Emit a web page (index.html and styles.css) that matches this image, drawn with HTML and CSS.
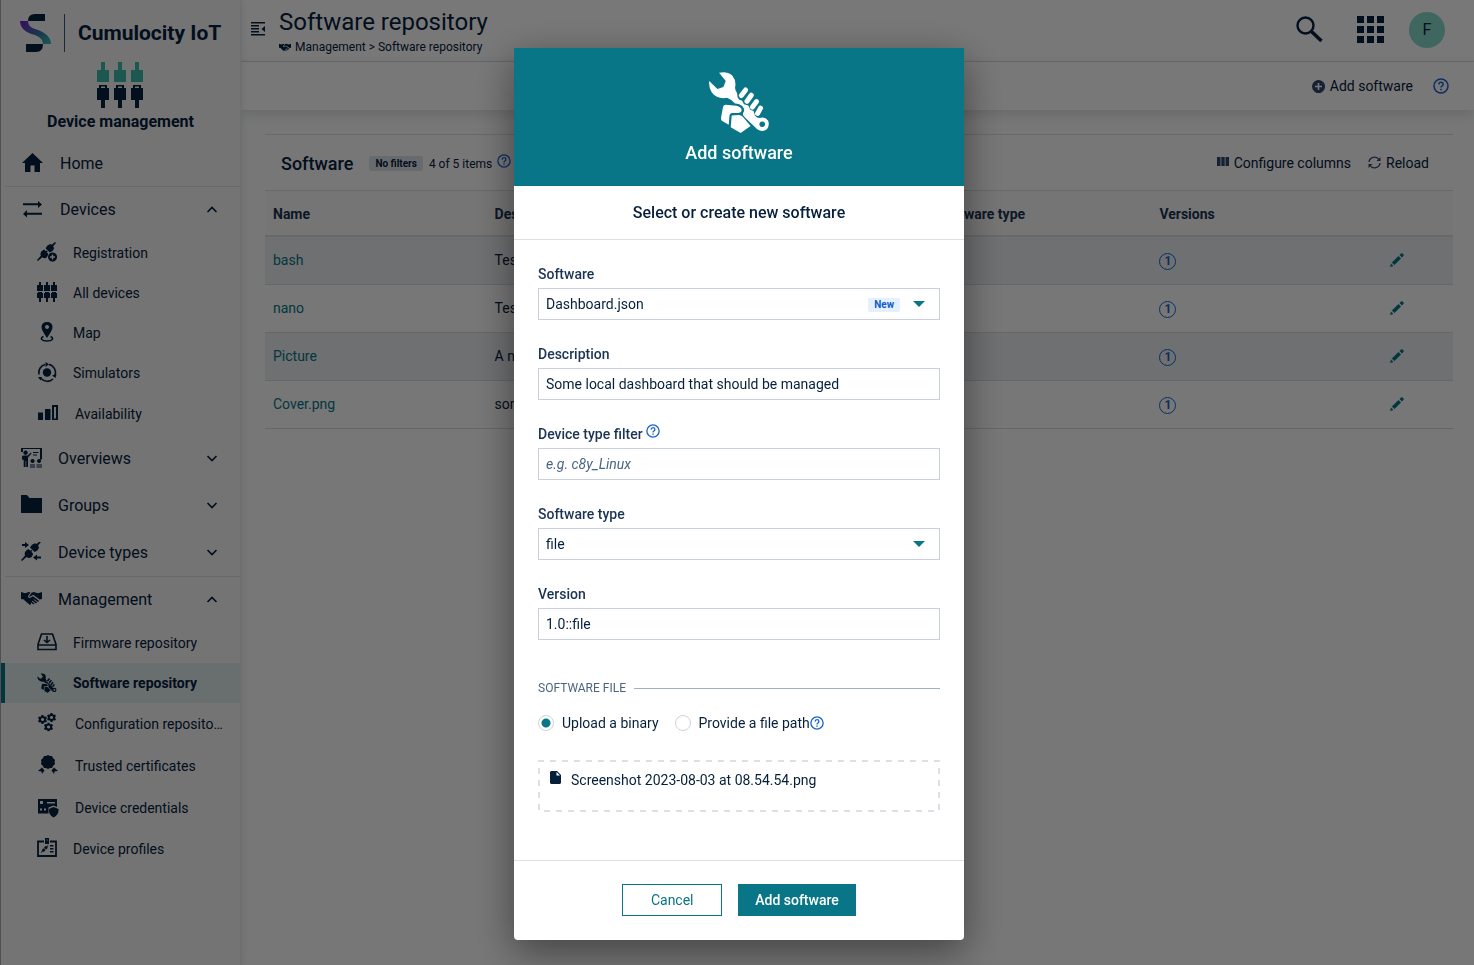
FILE: index.html
```html
<!DOCTYPE html>
<html lang="en">
<head>
<meta charset="utf-8">
<title>Software repository</title>
<link rel="stylesheet" href="styles.css">
</head>
<body>
<svg class="defs" aria-hidden="true">
  <symbol id="wrench" viewBox="205 62 186 190">
    <path fill-rule="evenodd" d="M238 67Q262 62 277 75Q291 92 286 112Q286 122 292 128L294 142Q297 150 307 151L313 162L326 166L332 179L342 183L346 196Q352 204 360 204Q376 198 386 212Q391 226 382 238Q368 248 353 238L316 202Q306 193 312 186Q316 178 309 169Q300 160 286 160Q275 148 262 143Q232 148 216 127Q206 112 208 92L233 116L251 110L258 92ZM368 214a8.500 8.500 0 1 0 .1 0Z"/>
    <path d="M318 119L305 136M335 135L322 153M351 154L338 171M363 174L354 190" fill="none" stroke="currentColor" stroke-width="15" stroke-linecap="round"/>
    <path d="M258 164L290 167Q306 171 306 181Q304 189 290 189L278 189Q269 190 269 200L267 224L246 212Q243 207 244 202L249 174Q251 164 258 164ZM276 196L297 195Q305 195 310 201L333 228L303 249L273 232Z"/>
  </symbol>
  <symbol id="shake" viewBox="0 0 21 15"><path d="M0 1L4 2.200 8 1 9.500 1.600 7 5Q6.800 7.500 9.500 6.800L12 5.200 18 9.800Q18 11.200 16.300 10.600L13 8.200 12.600 8.800 16 11.300Q15.800 12.700 14.300 12L11.500 9.800 11 10.400 13.600 12.600Q13 13.800 11.800 13L10 11.600Q10.500 13.500 9 14L7.500 12.800Q6.500 12.500 6.200 11.500 5 11.300 4.800 10.300 3.500 10 3 8.500L0 8ZM21 1L17 2.200 12.500 1 10.500 1.800 8.200 5.200Q8.300 6 9.300 5.600L12.200 3.800 18.600 8.500 21 8Z"/></symbol>
  <symbol id="help" viewBox="0 0 16 16"><circle cx="8" cy="8" r="7" fill="none" stroke="currentColor" stroke-width="1.500"/><path d="M5.800 6.400Q5.900 4.200 8 4.200T10.200 6.200Q10.200 7.200 9 8Q8 8.600 8 9.600" fill="none" stroke="currentColor" stroke-width="1.500"/><path d="M7.200 10.800h1.600v1.500H7.200z"/></symbol>
  <symbol id="up" viewBox="0 0 12 12"><path d="M1.500 8L6 3.500 10.500 8" fill="none" stroke="currentColor" stroke-width="1.700"/></symbol>
  <symbol id="down" viewBox="0 0 12 12"><path d="M1.500 3L6 7.500 10.500 3" fill="none" stroke="currentColor" stroke-width="1.700"/></symbol>
  <symbol id="pencil" viewBox="0 0 14 14"><path d="M0 14L1 10.500 3.500 13ZM1.800 9.500L8.500 3 11 5.500 4.500 12ZM9.500 2L11.300.3Q12 0 12.500.5L13.600 1.600Q14 2.200 13.600 2.800L12 4.500Z"/></symbol>
  <symbol id="plug" viewBox="0 0 20 20"><path d="M20 1L17 4.500 18 6.500Q17 10 13.500 11L9 6.500Q10.500 3 14 2.200L15.500 3 19 0ZM7.500 8L9.300 9.800 10.300 8.800 11.300 9.800 10.300 10.800 12 12.500Q11.500 17 7.500 17L5.500 16 1 20 0 19 4 14.500Q2.500 10.500 7.500 8Z"/></symbol>
  <symbol id="gear" viewBox="0 0 10 10"><path fill-rule="evenodd" d="M4 0h2l.4 1.400 1.200.6 1.400-.4 1 1.800-1 1v1.200l1 1-1 1.800-1.400-.4-1.200.6L6 10H4l-.4-1.400L2.400 8 1 8.400 0 6.600l1-1V4.400l-1-1 1-1.800 1.400.4 1.200-.6ZM5 3.200a1.800 1.800 0 1 0 .1 0Z"/></symbol>
</svg>

<div class="app">
  <aside class="sidebar">
    <div class="brand">
      <svg class="logo" viewBox="0 0 31 38"><defs><linearGradient id="swoosh" x1="0" y1="0" x2="1" y2="1"><stop offset="0" stop-color="#7a1cc8"/><stop offset=".55" stop-color="#386fa8"/><stop offset="1" stop-color="#35c3a8"/></linearGradient></defs><path d="M25 0H15Q8 0 8 7H25ZM6 38H16Q23 38 23 30H6Z"/><path d="M0 7H8Q8 13 15 15Q31 20 31 30H23Q23 24 15 21Q0 17 0 7Z" fill="url(#swoosh)"/></svg>
      <span class="brand-name">Cumulocity IoT</span>
    </div>
    <div class="app-title">
      <svg class="plugs" viewBox="0 0 46 46"><path class="mint" d="M0 8H4V0H8V8H12V20H0ZM17 8H21V0H25V8H29V20H17ZM34 8H38V0H42V8H46V20H34Z"/><path fill-rule="evenodd" d="M0 26H2V23H10V26H12V38H8V46H4V38H0ZM4 24.500V26H8V24.500ZM17 26H19V23H27V26H29V38H25V46H21V38H17ZM21 24.500V26H25V24.500ZM34 26H36V23H44V26H46V38H42V46H38V38H34ZM38 24.500V26H42V24.500Z"/></svg>
      <span>Device management</span>
    </div>
    <nav class="nav">
      <a class="item spaced" href="#"><svg viewBox="0 0 21 21"><path d="M10.500 0L0 10H3V19H8.500V12.500H12.500V19H18V10H21Z"/></svg><span>Home</span></a>
      <a class="item spaced ruled" href="#"><svg viewBox="0 0 21 21"><path d="M1 3.300H16V1L20 4.500 16 8V5.200H1ZM20 12.800H5V10L1 14 5 17.500V14.700H20Z"/></svg><span>Devices</span><svg class="chev"><use href="#up"/></svg></a>
      <a class="sub" href="#"><svg viewBox="0 1 20 20"><use href="#plug" width="19" height="19"/><circle cx="15.500" cy="15" r="5" fill="#f7f7f7"/><path fill-rule="evenodd" d="M15.500 10.500a4.500 4.500 0 1 0 .1 0ZM14.800 12.500H16.200V14.300H18V15.700H16.200V17.500H14.800V15.700H13V14.300H14.800Z"/></svg><span>Registration</span></a>
      <a class="sub" href="#"><svg viewBox="0 0 20 20"><path d="M0 2H2V-1H4V2H6V8H0ZM7 2H9V-1H11V2H13V8H7ZM14 2H16V-1H18V2H20V8H14ZM0 10H1V9H5V10H6V15H4V19H2V15H0ZM7 10H8V9H12V10H13V15H11V19H9V15H7ZM14 10H15V9H19V10H20V15H18V19H16V15H14Z"/></svg><span>All devices</span></a>
      <a class="sub" href="#"><svg viewBox="0 1 20 20"><path fill-rule="evenodd" d="M10 0Q15.500 0 15.500 5.500Q15.500 8 10 16Q4.500 8 4.500 5.500Q4.500 0 10 0ZM10 3a2 2 0 1 0 .1 0Z"/><path d="M6.500 14.500Q4 15.500 4.500 17.200Q6 19 10 19T15.500 17.200Q16 15.500 13.500 14.500" fill="none" stroke="currentColor" stroke-width="1.500"/></svg><span>Map</span></a>
      <a class="sub" href="#"><svg viewBox="0 1 20 20"><circle cx="10" cy="10.500" r="4.200"/><path d="M2 12.500A8.300 8.300 0 0 1 8 2.500M12 2.500A8.300 8.300 0 0 1 18 13.500M16 17A8.300 8.300 0 0 1 4 16.500" fill="none" stroke="currentColor" stroke-width="1.600"/><path d="M8.500 0L12 2.300 8.500 5ZM19.500 12L18.500 16 15 13.500ZM1 15H5L3.500 18.500Z"/></svg><span>Simulators</span></a>
      <a class="sub tall" href="#"><svg viewBox="0 1 20 20"><path fill-rule="evenodd" d="M0 9.500H5V17H0ZM7 6H12.500V17H7ZM14 2H20V17H14ZM16 4V15.500H18V4Z"/></svg><span>Availability</span></a>
      <a class="item" href="#"><svg viewBox="0 1 21 21"><path d="M0 0H21V12.500H19V2H2V5H0ZM4.500 3.500a2.200 2.200 0 1 0 .1 0ZM2 8.500H6.500L10 5.500 10.500 6.500 7 10.500V20H5.200V14H4.600V20H2.700V13L1 12.500V9.500ZM12 5H17.500V6H12ZM12 7.500H16V8.500H12ZM11.500 12a2 2 0 1 0 .1 0ZM18 12a2 2 0 1 0 .1 0ZM9 17.500H14V18.500H9ZM15.500 17.500H21V18.500H15.500ZM9 19.500H14V20.500H9ZM15.500 19.500H21V20.500H15.500Z"/></svg><span>Overviews</span><svg class="chev"><use href="#down"/></svg></a>
      <a class="item" href="#"><svg viewBox="0 1 21 21"><path d="M0 1H6L8.500 4H21V19H0Z"/></svg><span>Groups</span><svg class="chev"><use href="#down"/></svg></a>
      <a class="item" href="#"><svg viewBox="0 1 21 21"><use href="#plug" width="20" height="20"/><path d="M1 3H4V1L8 4 4 7V5H1ZM20 15.500H16V13.500L12 16.500 16 19.500V17.500H20Z"/></svg><span>Device types</span><svg class="chev"><use href="#down"/></svg></a>
      <a class="item ruled" href="#"><svg viewBox="0 1 21 21"><use href="#shake" y="2" width="21" height="15"/></svg><span>Management</span><svg class="chev"><use href="#up"/></svg></a>
      <a class="sub" href="#"><svg viewBox="0 1 20 20"><path d="M4.500 2H15.500L19 12.500V17.500H1V12.500ZM1 13H19M10 4V10M7 8L10 10.500 13 8" fill="none" stroke="currentColor" stroke-width="1.600"/></svg><span>Firmware repository</span></a>
      <a class="sub active" href="#"><svg><use href="#wrench"/></svg><span>Software repository</span></a>
      <a class="sub tall" href="#"><svg viewBox="0 1 20 20"><use href="#gear" x="0" y="2" width="9" height="9"/><use href="#gear" x="9" y="0" width="9" height="9"/><use href="#gear" x="6" y="9.500" width="9" height="9"/></svg><span>Configuration repository</span></a>
      <a class="sub tall" href="#"><svg viewBox="0 1 20 20"><path d="M10 0L12 1 14 1 15 3 17 5 16.500 7 17 9 15 11 14 13 12 13 10 14 8 13 6 13 5 11 3 9 3.500 7 3 5 5 3 6 1 8 1ZM4 12.500L6.500 15.500 4 19 3.500 16.500 0 16ZM16 12.500L13.500 15.500 16 19 16.500 16.500 20 16Z"/></svg><span>Trusted certificates</span></a>
      <a class="sub tall" href="#"><svg viewBox="0 0 20 20"><path fill-rule="evenodd" d="M0 1H19V9L15.500 7.500 10.500 9.500 10.500 15.500H0ZM2 3V6H5V3ZM9 4V5.500H17V4ZM2 10.500V12.500H4V10.500ZM6 10.500V12.500H8V10.500Z"/><path d="M15.500 9L20.500 11Q21 17 15.500 19.500Q10.500 17 11 11Z"/></svg><span>Device credentials</span></a>
      <a class="sub" href="#"><svg viewBox="0 1 20 20"><path d="M7 3.500H1V18H19V3.500H13" fill="none" stroke="currentColor" stroke-width="1.800"/><path fill-rule="evenodd" d="M8 0H12V6H8ZM9.500 1.500V2.500H10.500V1.500ZM13 7H16.500V8.500H13ZM13 10H16.500V11.500H13ZM13 13H16.500V14.500H13Z"/><use href="#plug" x="3.500" y="7" width="8" height="8"/></svg><span>Device profiles</span></a>
    </nav>
  </aside>

  <main class="main">
    <header class="topbar">
      <button class="icon-btn" aria-label="Toggle navigation"><svg width="14" height="14" viewBox="0 0 14 14"><path d="M0 0H14V1.500H0ZM0 3H8V4.500H0ZM0 6H8V7.500H0ZM0 9H8V10.500H0ZM0 12H14V13.500H0ZM14 4V10L10.500 7Z"/></svg></button>
      <div class="heading">
        <h1>Software repository</h1>
        <p class="crumbs"><svg width="12" height="9"><use href="#shake"/></svg>Management &gt; Software repository</p>
      </div>
      <div class="tools">
        <button class="icon-btn" aria-label="Search"><svg width="27" height="27" viewBox="0 0 27 27"><circle cx="9.500" cy="9.500" r="8" fill="none" stroke="currentColor" stroke-width="2.400"/><path d="M15.500 15.500L25.500 25" stroke="currentColor" stroke-width="3.600"/></svg></button>
        <button class="icon-btn" aria-label="Applications"><svg width="27" height="27" viewBox="0 0 27 27"><path d="M0 0H7V7H0ZM10 0H17V7H10ZM20 0H27V7H20ZM0 10H7V17H0ZM10 10H17V17H10ZM20 10H27V17H20ZM0 20H7V27H0ZM10 20H17V27H10ZM20 20H27V27H20Z"/></svg></button>
        <button class="avatar">F</button>
      </div>
    </header>
    <div class="actionbar">
      <button class="text-btn"><svg class="slate" width="13" height="13" viewBox="0 0 13 13"><path fill-rule="evenodd" d="M6.500 0a6.500 6.500 0 1 0 .1 0ZM5.700 3H7.300V5.700H10V7.300H7.300V10H5.700V7.300H3V5.700H5.700Z"/></svg>Add software</button>
      <button class="icon-btn help" aria-label="Help"><svg width="16" height="16"><use href="#help"/></svg></button>
    </div>
    <section class="card">
      <div class="card-head">
        <h2>Software</h2>
        <span class="tag">No filters</span>
        <span class="count">4 of 5 items</span>
        <button class="icon-btn help raised" aria-label="About items"><svg width="14" height="14"><use href="#help"/></svg></button>
        <div class="card-tools">
          <button class="text-btn"><svg class="slate" width="12" height="13" viewBox="0 0 12 13"><path d="M0 1H3.500V10H0ZM4.300 1H7.700V10H4.300ZM8.500 1H12V10H8.500Z"/></svg>Configure columns</button>
          <button class="text-btn"><svg class="slate" width="13" height="13" viewBox="0 0 13 13"><path d="M1 6A5.500 5.500 0 0 1 11 3.500M12 7A5.500 5.500 0 0 1 2 9.500" fill="none" stroke="currentColor" stroke-width="1.300"/><path d="M12.500 1V5H8.500ZM.5 12V8H4.500Z"/></svg>Reload</button>
        </div>
      </div>
      <table class="grid">
        <thead><tr><th>Name</th><th>Description</th><th></th><th>Software type</th><th>Versions</th><th class="act"></th></tr></thead>
        <tbody>
          <tr><td><a href="#">bash</a></td><td>Test</td><td></td><td></td><td><span class="num">1</span></td><td class="act"><button class="icon-btn edit" aria-label="Edit bash"><svg width="14" height="14"><use href="#pencil"/></svg></button></td></tr>
          <tr><td><a href="#">nano</a></td><td>Test</td><td></td><td></td><td><span class="num">1</span></td><td class="act"><button class="icon-btn edit" aria-label="Edit nano"><svg width="14" height="14"><use href="#pencil"/></svg></button></td></tr>
          <tr><td><a href="#">Picture</a></td><td>A new</td><td></td><td></td><td><span class="num">1</span></td><td class="act"><button class="icon-btn edit" aria-label="Edit Picture"><svg width="14" height="14"><use href="#pencil"/></svg></button></td></tr>
          <tr><td><a href="#">Cover.png</a></td><td>some</td><td></td><td></td><td><span class="num">1</span></td><td class="act"><button class="icon-btn edit" aria-label="Edit Cover.png"><svg width="14" height="14"><use href="#pencil"/></svg></button></td></tr>
        </tbody>
      </table>
    </section>
  </main>
</div>

<div class="backdrop">
  <form class="modal" role="dialog" aria-labelledby="dlg-title">
    <header class="modal-head">
      <svg width="62" height="63"><use href="#wrench"/></svg>
      <h3 id="dlg-title">Add software</h3>
    </header>
    <h4 class="modal-sub">Select or create new software</h4>
    <div class="modal-body">
      <div class="field">
        <label for="software">Software</label>
        <div class="control"><select id="software"><option>Dashboard.json</option></select><span class="new">New</span><svg class="caret" viewBox="0 0 12 6"><path d="M0 0H12L6 6Z"/></svg></div>
      </div>
      <div class="field">
        <label for="description">Description</label>
        <input class="text" id="description" type="text" value="Some local dashboard that should be managed">
      </div>
      <div class="field">
        <div class="label-row"><label for="filter">Device type filter</label><button type="button" class="icon-btn help raised" aria-label="About the filter"><svg width="14" height="14"><use href="#help"/></svg></button></div>
        <input class="text" id="filter" type="text" placeholder="e.g. c8y_Linux">
      </div>
      <div class="field">
        <label for="type">Software type</label>
        <div class="control"><select id="type"><option>file</option></select><svg class="caret" viewBox="0 0 12 6"><path d="M0 0H12L6 6Z"/></svg></div>
      </div>
      <div class="field">
        <label for="version">Version</label>
        <input class="text" id="version" type="text" value="1.0::file">
      </div>
      <div class="legend">Software file</div>
      <div class="radios">
        <label class="radio"><input type="radio" name="source" checked>Upload a binary</label>
        <label class="radio"><input type="radio" name="source">Provide a file path</label>
        <button type="button" class="icon-btn help" aria-label="About file path"><svg width="14" height="14"><use href="#help"/></svg></button>
      </div>
      <div class="drop">
        <svg class="dashes" width="100%" height="100%"><rect x="1" y="1" width="100%" height="100%"/></svg>
        <svg width="11" height="15" viewBox="0 0 11 15"><path fill-rule="evenodd" d="M1 1H7L11 5V13L10 14H1L0 13V2ZM6.500 2V5.500H10Z"/></svg>
        <span>Screenshot 2023-08-03 at 08.54.54.png</span>
      </div>
    </div>
    <footer class="modal-foot">
      <button type="button" class="btn">Cancel</button>
      <button type="submit" class="btn primary">Add software</button>
    </footer>
  </form>
</div>
</body>
</html>
```
FILE: styles.css
```css
* { box-sizing: border-box; }
body {
  margin: 0;
  font: 14px/20px Roboto, "Liberation Sans", sans-serif;
  color: #06203c;
  background: #fdfdfd;
}
h1, h2, h3, h4, p { margin: 0; font-weight: 500; }
a { color: inherit; text-decoration: none; }
svg { fill: currentColor; display: block; flex: none; }
button { font: inherit; color: inherit; background: none; border: 0; padding: 0; cursor: pointer; }
.defs { position: absolute; width: 0; height: 0; }

.app { display: flex; min-height: 100vh; }

/* Sidebar */
.sidebar {
  width: 241px;
  flex: none;
  background: #f7f7f7;
  border-left: 1px solid #aaa;
  border-right: 1px solid #e8eaee;
  box-shadow: 0 0 8px rgba(20, 50, 90, .15);
  z-index: 1;
}
.brand { display: flex; align-items: center; padding: 14px 0 0 19px; height: 52px; }
.logo { width: 31px; height: 38px; }
.brand-name {
  margin-left: 13px;
  padding-left: 13px;
  border-left: 1px solid #3a5a7a;
  font-size: 21px;
  font-weight: 700;
  line-height: 38px;
}
.app-title {
  display: flex;
  flex-direction: column;
  align-items: center;
  gap: 4px;
  padding: 10px 2px 8px 0;
  height: 88px;
  font-size: 16px;
  font-weight: 700;
}
.app-title span { margin-left: 2px; }
.plugs { width: 46px; height: 46px; }
.mint { fill: #3cbcab; }
.item { display: flex; align-items: center; height: 47px; padding: 0 22px 0 20px; font-size: 16px; }
.item > svg:first-child { width: 21px; height: 21px; }
.item span { flex: 1; margin-left: 16px; }
.item.spaced { height: 46px; padding-left: 21px; }
.item.spaced span { margin-left: 17px; }
.item.spaced:first-child { padding-top: 1px; }
.item.ruled { border-top: 1px solid #dcdfe4; height: 47px; margin-left: 4px; padding-left: 16px; }
.item.spaced.ruled { padding-left: 17px; }
.item .chev { width: 12px; height: 12px; }
.sub { display: flex; align-items: center; height: 40px; padding: 0 16px 0 36px; }
.sub > svg { width: 20px; height: 20px; overflow: visible; }
.sub span { margin-left: 16px; overflow: hidden; white-space: nowrap; text-overflow: ellipsis; }
.sub.tall { height: 42px; padding-left: 37px; }
.sub.tall span { margin-left: 17px; }
.sub.active { background: #dfeaec; border-left: 4px solid #087686; padding-left: 32px; font-weight: 700; }

/* Main column */
.main { flex: 1; min-width: 0; }
.topbar { display: flex; height: 62px; padding: 0 29px 0 10px; border-bottom: 1px solid #dadde2; background: #fff; }
.topbar > .icon-btn { align-self: center; margin-right: 14px; padding-bottom: 4px; }
.heading { padding-top: 6px; }
.heading h1 { font-size: 24px; line-height: 32px; font-weight: 400; }
.crumbs { display: flex; align-items: center; gap: 4px; font-size: 12px; line-height: 18px; font-weight: 400; }
.tools { display: flex; align-items: center; gap: 34px; margin-left: auto; padding-bottom: 2px; }
.avatar { width: 36px; height: 36px; margin-left: -9px; border-radius: 50%; background: #86dccd; font-size: 16px; }
.actionbar {
  display: flex;
  align-items: center;
  justify-content: flex-end;
  gap: 20px;
  height: 48px;
  padding: 0 25px;
  background: #fff;
  box-shadow: 0 4px 12px rgba(20, 40, 60, .15);
}
.text-btn { display: flex; align-items: center; gap: 5px; }
.slate { color: #2f4a6c; }
.help { color: #1a62cf; }
.card { margin: 24px 21px 0 24px; border-top: 1px solid #dadde2; }
.card-head { display: flex; align-items: center; height: 56px; padding: 2px 24px 0 16px; border-bottom: 1px solid #dadde2; }
.card-head h2 { font-size: 18px; line-height: 24px; }
.tag { margin-left: 16px; padding: 0 6px; border-radius: 2px; background: #dde4e7; font-size: 10px; line-height: 15px; font-weight: 700; }
.count { margin: 0 5px 0 6px; font-size: 12px; }
.raised { padding-bottom: 6px; }
.card-tools { display: flex; gap: 17px; margin-left: auto; padding-bottom: 2px; }

.grid { width: 100%; table-layout: fixed; border-collapse: separate; border-spacing: 0; }
.grid th { height: 46px; padding: 1px 8px 0; background: #f8f8f9; border-bottom: 2px solid #dadde2; text-align: left; font-weight: 700; color: #1a3352; }
.grid td { height: 48px; padding: 13px 8px 14px; border-bottom: 1px solid #d4d8de; vertical-align: top; }
.grid tbody tr:nth-child(odd) { background: #e9edf0; }
.grid .act { width: 80px; padding-left: 17px; }
.grid a { color: #087686; }
.num {
  display: block;
  width: 17px;
  height: 17px;
  margin-top: 3px;
  border: 1px solid #1a62cf;
  border-radius: 50%;
  color: #1a62cf;
  font-size: 12px;
  font-weight: 700;
  line-height: 15px;
  text-align: center;
}
.edit { display: block; margin-top: 3px; color: #087686; }

/* Dialog */
.backdrop {
  position: fixed;
  inset: 0;
  z-index: 2;
  display: flex;
  justify-content: center;
  align-items: flex-start;
  padding: 48px 0 0 4px;
  overflow: auto;
  background: rgba(0, 0, 0, .53);
}
.modal {
  width: 450px;
  max-width: 100%;
  background: #fff;
  border-radius: 4px;
  box-shadow: 0 12px 40px rgba(0, 0, 0, .45);
}
.modal-head { display: flex; flex-direction: column; align-items: center; gap: 7px; padding: 23px 0 21px; background: #087686; color: #fff; }
.modal-head h3 { font-size: 18px; line-height: 24px; }
.modal-sub { padding: 17px 0 16px; border-bottom: 1px solid #dcdfe6; font-size: 16px; line-height: 20px; text-align: center; }
.modal-body { padding: 24px 24px 48px; }
.field { margin-bottom: 24px; }
.field label { display: block; margin-bottom: 4px; font-weight: 500; color: #1a3352; }
.label-row { display: flex; gap: 3px; height: 24px; }
.label-row .icon-btn { align-self: flex-start; }
.control { position: relative; }
.text, select {
  display: block;
  width: 100%;
  height: 32px;
  padding: 0 7px;
  border: 1px solid #c8d1d9;
  border-radius: 0;
  background: #fff;
  color: #06203c;
  font: inherit;
  appearance: none;
}
.text::placeholder { color: #4a6582; font-style: italic; opacity: 1; }
.caret { position: absolute; right: 15px; top: 13px; width: 12px; height: 6px; color: #087686; pointer-events: none; }
.new { position: absolute; right: 40px; top: 10px; padding: 0 6px; border-radius: 2px; background: #e4f0fd; color: #0f5bc9; font-size: 10px; line-height: 14px; font-weight: 700; pointer-events: none; }
.legend { display: flex; align-items: center; gap: 8px; margin-top: 38px; color: #4a6582; font-size: 12px; text-transform: uppercase; }
.legend::after { content: ""; flex: 1; height: 1px; background: #9fb0c2; }
.radios { display: flex; align-items: center; margin-top: 15px; }
.radio { display: flex; align-items: center; gap: 8px; }
.radio + .radio { margin-left: 16px; }
.radio input { appearance: none; width: 16px; height: 16px; margin: 0; border: 1px solid #cdd5dc; border-radius: 50%; background: #fff; }
.radio input:checked { background: radial-gradient(circle, #087686 4px, #fff 5px); }
.drop { position: relative; display: flex; align-items: flex-start; gap: 10px; height: 52px; margin-top: 27px; padding: 10px 12px; overflow: hidden; }
.dashes { position: absolute; inset: 0; padding: 0 2px 2px 0; overflow: visible; fill: none; stroke: #dcdfe6; stroke-width: 2px; stroke-dasharray: 6 6; stroke-dashoffset: 1px; }
.modal-foot { display: flex; justify-content: center; gap: 16px; padding: 23px 0 24px; border-top: 1px solid #dcdfe6; }
.btn { min-width: 100px; height: 32px; padding: 0 16px; border: 1px solid #087686; color: #087686; }
.btn.primary { background: #087686; color: #fff; font-weight: 500; }
```
